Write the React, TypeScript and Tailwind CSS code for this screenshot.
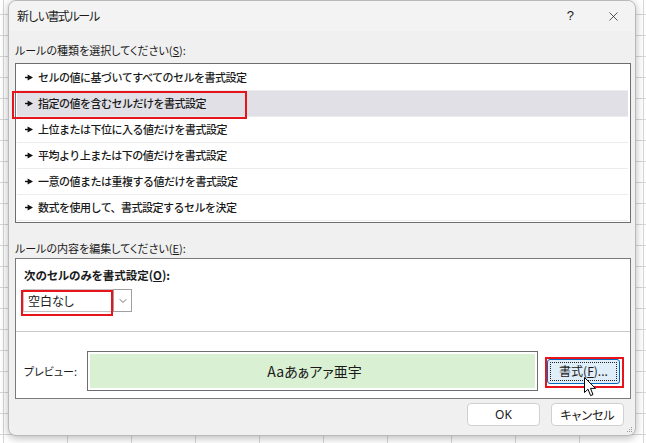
import { X, ChevronDown } from "lucide-react"

const rules = [
  "セルの値に基づいてすべてのセルを書式設定",
  "指定の値を含むセルだけを書式設定",
  "上位または下位に入る値だけを書式設定",
  "平均より上または下の値だけを書式設定",
  "一意の値または重複する値だけを書式設定",
  "数式を使用して、書式設定するセルを決定",
]

function Bullet() {
  return (
    <svg width="8" height="7" viewBox="0 0 8 7" className="shrink-0">
      <rect x="0" y="2.8" width="4" height="1.4" fill="#111" />
      <polygon points="2.6,0.6 8,3.5 2.6,6.4" fill="#111" />
    </svg>
  )
}

function Cursor() {
  return (
    <svg width="13" height="20" viewBox="0 0 13 20">
      <path
        d="M0.5 0.5 L0.5 15.5 L4 12.2 L6.6 18.6 L9 17.6 L6.5 11.4 L11.5 11.4 Z"
        fill="#fff"
        stroke="#000"
        strokeWidth="1"
        strokeLinejoin="round"
      />
    </svg>
  )
}

export default function App() {
  return (
    <div className="w-[646px] h-[443px] overflow-hidden bg-white bg-[linear-gradient(#d6d6d6_1px,transparent_1px),linear-gradient(90deg,#d6d6d6_1px,transparent_1px)] bg-[size:64px_21px] bg-[position:3px_14px] font-['Noto_Sans_CJK_JP','Noto_Sans',sans-serif] [font-feature-settings:'palt'] text-[#1a1a1a]">
      <div className="relative ml-[8px] w-[628px] h-[436px] flex flex-col bg-[#f0f0f0] border border-[#b9b9b9] rounded-[8px] shadow-[0_2px_8px_rgba(0,0,0,0.28)]">
        {/* title bar */}
        <div className="h-[30px] flex items-center pl-[8px] pr-[14px] bg-[#f3f3f3] rounded-t-[8px]">
          <span className="text-[12px] tracking-[-1.8px] [font-feature-settings:normal]">新しい書式ルール</span>
          <span className="ml-auto text-[13px] font-['Liberation_Sans',sans-serif] mr-[32px]">?</span>
          <X size={15} strokeWidth={1.2} className="text-[#222]" />
        </div>

        <div className="flex flex-col px-[6px] pr-[4px]">
          <div className="mt-[11px] h-[16px] leading-[16px] text-[11px]">
            ルールの種類を選択してください(<span className="underline">S</span>):
          </div>

          {/* rule type list */}
          <div className="mt-[5px] h-[160px] border border-[#6e6e6e] bg-white pl-[1px] pr-[2px] pt-[1px]">
            {rules.map((r, i) => (
              <div
                key={r}
                className={`h-[26px] flex items-center gap-[5px] pl-[8px] border-b border-[#ececec] ${
                  i === 1 ? "bg-[#e0e0e6]" : ""
                }`}
              >
                <Bullet />
                <span className="text-[11px] tracking-[-0.5px] font-medium [font-feature-settings:normal]">{r}</span>
              </div>
            ))}
          </div>

          <div className="mt-[17px] h-[16px] leading-[16px] text-[11px]">
            ルールの内容を編集してください(<span className="underline">E</span>):
          </div>

          {/* edit panel */}
          <div className="mt-[2px] h-[141px] border border-[#7a7a7a] bg-white flex flex-col">
            <div className="pt-[8px] pl-[8px] h-[24px] leading-[16px] text-[11.5px] font-bold">
              次のセルのみを書式設定(<span className="underline">O</span>):
            </div>
            <div className="mt-[6px] ml-[7px] flex h-[23px]">
              <div className="w-[90px] h-full border border-[#c4c4c4] flex items-center pl-[4px] text-[12px]">
                空白なし
              </div>
              <div className="w-[19px] h-full border border-[#a0a0a0] flex items-center justify-center">
                <ChevronDown size={12} strokeWidth={1.5} className="text-[#444]" />
              </div>
            </div>
            <div className="mt-[19px] h-px bg-[#c8c8c8]" />
            <div className="mt-[19px] flex items-center pl-[8px]">
              <span className="w-[63px] text-[11px]">プレビュー:</span>
              <div className="w-[451px] h-[40px] border border-[#6e6e6e] p-[2px]">
                <div className="w-full h-full bg-[#d9f0d3] flex items-center justify-center text-[14px] pl-[4px]">
                  Aaあぁアァ亜宇
                </div>
              </div>
              <div className="ml-[9px] w-[73px] h-[25px] rounded-[3px] border border-[#0067c0] bg-[#e0eef9] p-[2px]">
                <div className="w-full h-full border border-dotted border-[#222] flex items-center justify-center text-[12px]">
                  書式(<span className="underline">F</span>)...
                </div>
              </div>
            </div>
          </div>
        </div>

        {/* footer buttons */}
        <div className="mt-[4px] flex justify-end gap-[11px] pr-[11px]">
          <button className="w-[73px] h-[23px] rounded-[4px] border border-[#d0d0d0] bg-white text-[12px] font-['Noto_Sans',sans-serif]">
            OK
          </button>
          <button className="w-[73px] h-[23px] rounded-[4px] border border-[#d0d0d0] bg-white text-[12px]">
            キャンセル
          </button>
        </div>

        {/* resize grip */}
        <div className="absolute right-[3px] bottom-[3px] grid grid-cols-3 gap-[1px]">
          {[0, 1, 2, 3, 4, 5, 6, 7, 8].map((n) => (
            <span key={n} className={`w-[1px] h-[1px] ${n === 0 || n === 1 || n === 3 ? "bg-transparent" : "bg-[#9a9a9a]"}`} />
          ))}
        </div>

        {/* red annotation boxes */}
        <div className="absolute left-[3px] top-[90px] w-[235px] h-[28px] border-2 border-[#e8141c]" />
        <div className="absolute left-[12px] top-[289px] w-[92px] h-[26px] border-2 border-[#e8141c]" />
        <div className="absolute left-[536px] top-[356px] w-[79px] h-[31px] border-2 border-[#e8141c]" />

        {/* mouse cursor */}
        <div className="absolute left-[575px] top-[376px]">
          <Cursor />
        </div>
      </div>
    </div>
  )
}
